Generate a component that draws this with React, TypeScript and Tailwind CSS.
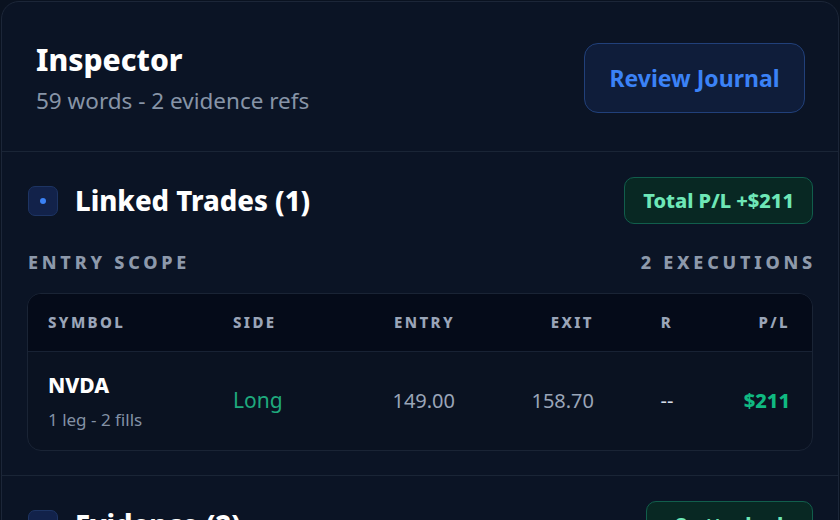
import React from "react";

const font = { fontFamily: "'Noto Sans', 'Open Sans', sans-serif" };

function SectionIcon() {
  return (
    <div className="flex h-[30px] w-[30px] items-center justify-center rounded-[7px] border border-[#1d3463] bg-[#12224a]">
      <div className="h-[6px] w-[6px] rounded-full bg-[#3b82f6]" />
    </div>
  );
}

export default function App() {
  return (
    <div className="h-[520px] w-[840px] overflow-hidden bg-[#0a1220]" style={font}>
      <div className="mx-px mt-px h-[560px] rounded-t-[18px] border border-[#1c2638] bg-[#0b1425]">
        <div className="flex items-center justify-between pl-[34px] pr-[33px] pt-[38px] pb-[35px]">
          <div>
            <div className="text-[30px] font-extrabold leading-[40px] text-white">Inspector</div>
            <div className="mt-[6px] text-[22.5px] leading-[30px] text-[#8794a7]">59 words - 2 evidence refs</div>
          </div>
          <button className="h-[70px] w-[221px] rounded-[14px] border border-[#21407a] bg-[#0f1d3a] text-[23px] font-bold text-[#3b82f6]">
            Review Journal
          </button>
        </div>
        <div className="border-t border-[#1a2536] px-[25px] pt-[25px] pb-[24px]">
          <div className="flex items-center justify-between">
            <div className="flex items-center gap-[17px] pl-px">
              <SectionIcon />
              <div className="text-[27.5px] font-extrabold leading-[34px] text-white">Linked Trades (1)</div>
            </div>
            <div className="flex h-[47px] items-center rounded-[10px] border border-[#115e4c] bg-[#082823] px-[18px] text-[20px] font-extrabold text-[#6ee7b7]">
              Total P/L +$211
            </div>
          </div>
          <div className="mt-[26px] flex items-center justify-between pl-px text-[18px] font-extrabold uppercase leading-[24px] tracking-[0.21em] text-[#8d99ab]">
            <span>Entry Scope</span>
            <span className="mr-[-3px]">2 Executions</span>
          </div>
          <div className="mt-[19px] overflow-hidden rounded-[14px] border border-[#1a2435] bg-[#0a1221]">
            <div className="grid h-[57px] grid-cols-[185px_110px_112px_139px_146px_50px] items-center bg-[#050b19] pl-[20px] text-[15px] font-extrabold uppercase tracking-[0.16em] text-[#9aa5b8]">
              <span>Symbol</span>
              <span>Side</span>
              <span className="text-right">Entry</span>
              <span className="text-right">Exit</span>
              <span className="text-center">R</span>
              <span className="text-right">P/L</span>
            </div>
            <div className="grid h-[99px] grid-cols-[185px_110px_112px_139px_146px_50px] items-center border-t border-[#182234] pl-[20px]">
              <div>
                <div className="text-[21px] font-extrabold leading-[26px] text-white">NVDA</div>
                <div className="mt-[11px] text-[17px] leading-[22px] text-[#8391a5]">1 leg - 2 fills</div>
              </div>
              <span className="text-[21px] text-[#1fa97d]">Long</span>
              <span className="text-right text-[20px] text-[#9aa5b8]">149.00</span>
              <span className="text-right text-[20px] text-[#9aa5b8]">158.70</span>
              <span className="text-center text-[20px] text-[#d6dce6]">--</span>
              <span className="text-right text-[20px] font-extrabold text-[#10b981]">$211</span>
            </div>
          </div>
        </div>
        <div className="border-t border-[#1a2536] px-[25px] pt-[25px]">
          <div className="flex items-center justify-between">
            <div className="flex items-center gap-[17px] pl-px">
              <SectionIcon />
              <div className="text-[27.5px] font-extrabold leading-[34px] text-white">Evidence (2)</div>
            </div>
            <div className="flex h-[47px] w-[167px] items-center justify-center rounded-[10px] border border-[#115e4c] bg-[#082823] text-[20px] font-extrabold text-[#6ee7b7]">
              2 attached
            </div>
          </div>
        </div>
      </div>
    </div>
  );
}
